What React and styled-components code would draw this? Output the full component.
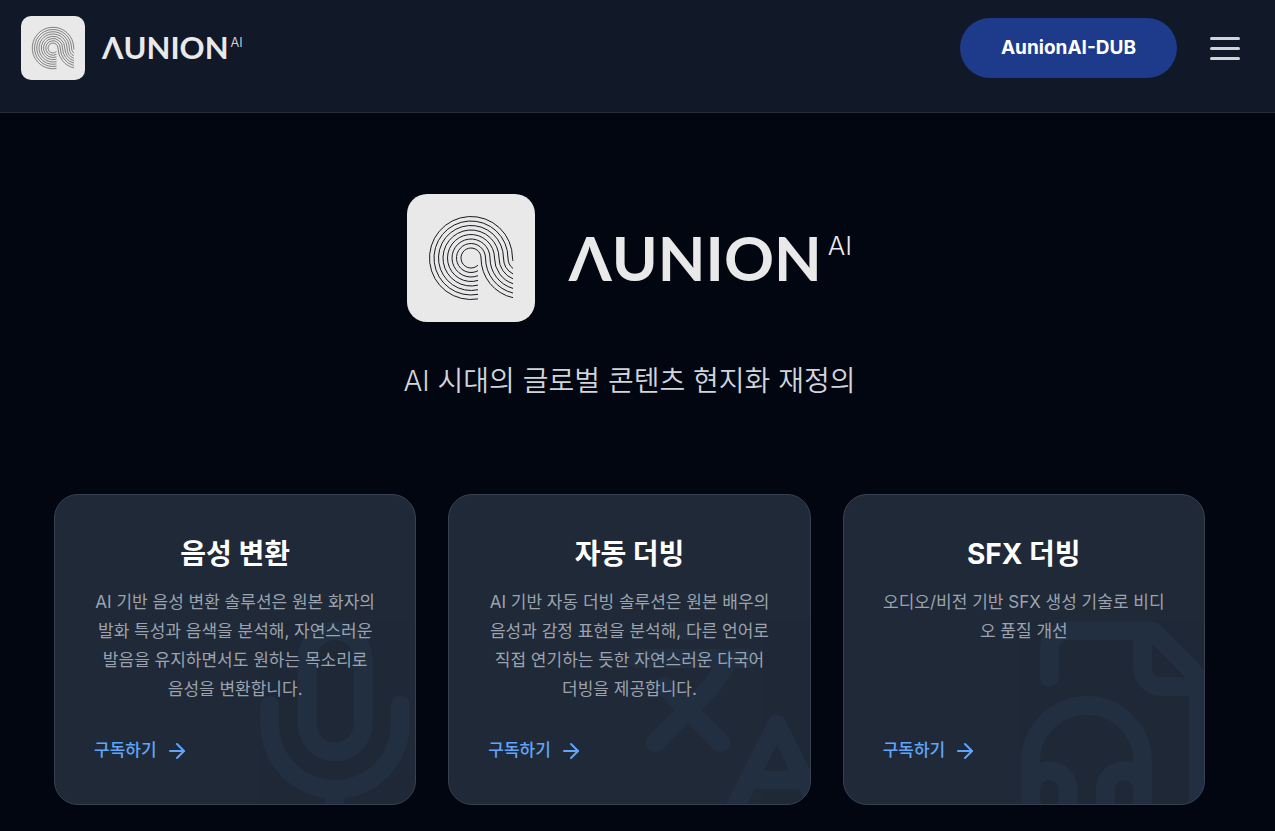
import React from "react";
import styled, { createGlobalStyle } from "styled-components";
import { ArrowRight, Languages, Mic } from "lucide-react";

const GlobalStyle = createGlobalStyle`
  *, *::before, *::after {
    box-sizing: border-box;
  }

  body {
    margin: 0;
    background: #020611;
    color: #ffffff;
    font-family: Inter, "Noto Sans CJK KR", sans-serif;
  }

  h1, h2, p {
    margin: 0;
  }
`;

const Page = styled.div`
  min-height: 100vh;
`;

const Header = styled.header`
  display: flex;
  align-items: center;
  justify-content: space-between;
  padding: 16px 35px 32px 21px;
  background: #111827;
  border-bottom: 1px solid #252d3b;
`;

const HomeLink = styled.a`
  display: flex;
  align-items: center;
  gap: 17px;
  color: #e9e9eb;
  text-decoration: none;
`;

const Actions = styled.div`
  display: flex;
  align-items: center;
  gap: 33px;
`;

const DubButton = styled.button`
  height: 60px;
  padding: 0 41px;
  border: 0;
  border-radius: 30px;
  background: #1e3a8a;
  color: #ffffff;
  font: inherit;
  font-size: 19px;
  font-weight: 700;
  line-height: 28px;
  cursor: pointer;
`;

const MenuButton = styled.button`
  display: flex;
  flex-direction: column;
  gap: 7px;
  width: 30px;
  padding: 0;
  border: 0;
  background: transparent;
  cursor: pointer;
`;

const MenuBar = styled.span`
  height: 3px;
  border-radius: 2px;
  background: #d1d5db;
`;

const LogoSvg = styled.svg`
  display: block;
  flex: none;
  width: ${(p) => p.$size}px;
  height: ${(p) => p.$size}px;
`;

const WordmarkText = styled.span`
  display: flex;
  align-items: flex-start;
  gap: ${(p) => (p.$large ? 6 : 2)}px;
  padding-bottom: 2px;
  color: #e9e9ea;
  font-family: Lato, sans-serif;
  font-size: ${(p) => (p.$large ? 62 : 31)}px;
  font-weight: 700;
  line-height: ${(p) => (p.$large ? 64 : 32)}px;
`;

const WordmarkSuffix = styled.span`
  font-family: Inter, sans-serif;
  font-size: ${(p) => (p.$large ? 26 : 13)}px;
  font-weight: 300;
  line-height: ${(p) => (p.$large ? 42 : 22)}px;
`;

const Main = styled.main`
  padding: 81px 70px 26px 54px;
`;

const Hero = styled.section`
  display: flex;
  flex-direction: column;
  align-items: center;
  gap: 39px;
  margin-bottom: 93px;
`;

const HeroLogo = styled.h1`
  display: flex;
  align-items: center;
  gap: 34px;
`;

const Tagline = styled.p`
  color: #d1d5db;
  font-size: 28px;
  font-weight: 350;
  line-height: 40px;
  text-align: center;
`;

const CardGrid = styled.section`
  display: grid;
  grid-template-columns: repeat(3, minmax(0, 1fr));
  gap: 32px;
`;

const Card = styled.article`
  position: relative;
  display: flex;
  flex-direction: column;
  overflow: hidden;
  padding: 41px 39px 39px;
  border: 1px solid #374151;
  border-radius: 24px;
  background: #1f2937;
`;

const Watermark = styled.div`
  position: absolute;
  right: -32px;
  bottom: -32px;
  color: #60a5fa;
  opacity: 0.05;
  pointer-events: none;

  svg {
    display: block;
    width: 224px;
    height: 224px;
  }
`;

const CardTitle = styled.h2`
  margin-bottom: 16px;
  font-size: 28px;
  font-weight: 700;
  line-height: 36px;
  text-align: center;
`;

const CardText = styled.p`
  flex: 1;
  margin-bottom: 32px;
  color: #9ca3af;
  font-size: 17px;
  line-height: 29px;
  text-align: center;
`;

const CardLink = styled.a`
  display: flex;
  align-items: center;
  gap: 8px;
  align-self: flex-start;
  color: #60a5fa;
  font-size: 17px;
  font-weight: 500;
  line-height: 29px;
  text-decoration: none;
`;

const RINGS = [10, 14.5, 19, 23.5, 28, 32.5, 37, 41.5];

// Each line circles the centre, then bends outward into the tail.
function ringPath(r) {
  const tail = 114.6 - 64 - r;
  const startY = 64 + Math.sqrt(r * r - 49);
  const endY = 64 + Math.sqrt(tail * tail - 8.6 * 8.6);
  return `M71 ${startY} A${r} ${r} 0 1 1 ${64 + r} 64 A${tail} ${tail} 0 0 0 106 ${endY}`;
}

function LogoMark({ size }) {
  return (
    <LogoSvg $size={size} viewBox="0 0 128 128" aria-hidden="true">
      <rect width="128" height="128" rx="20" fill="#e9e9e9" />
      <g fill="none" stroke="#16181c" strokeWidth="1">
        {RINGS.map((r) => (
          <path key={r} d={ringPath(r)} />
        ))}
      </g>
    </LogoSvg>
  );
}

function Wordmark({ large }) {
  return (
    <WordmarkText $large={large}>
      ΛUNION
      <WordmarkSuffix $large={large}>AI</WordmarkSuffix>
    </WordmarkText>
  );
}

function FileHeadphones() {
  return (
    <svg
      viewBox="0 0 24 24"
      fill="none"
      stroke="currentColor"
      strokeWidth="2"
      strokeLinecap="round"
      strokeLinejoin="round"
    >
      <path d="M17.5 22h.5a2 2 0 0 0 2-2V7l-5-5H6a2 2 0 0 0-2 2v3" />
      <path d="M14 2v4a2 2 0 0 0 2 2h4" />
      <path d="M2 19a2 2 0 1 1 4 0v1a2 2 0 1 1-4 0v-4a6 6 0 0 1 12 0v4a2 2 0 1 1-4 0v-1a2 2 0 1 1 4 0" />
    </svg>
  );
}

const SERVICES = [
  {
    title: "음성 변환",
    text: "AI 기반 음성 변환 솔루션은 원본 화자의 발화 특성과 음색을 분석해, 자연스러운 발음을 유지하면서도 원하는 목소리로 음성을 변환합니다.",
    icon: Mic,
  },
  {
    title: "자동 더빙",
    text: "AI 기반 자동 더빙 솔루션은 원본 배우의 음성과 감정 표현을 분석해, 다른 언어로 직접 연기하는 듯한 자연스러운 다국어 더빙을 제공합니다.",
    icon: Languages,
  },
  {
    title: "SFX 더빙",
    text: "오디오/비전 기반 SFX 생성 기술로 비디오 품질 개선",
    icon: FileHeadphones,
  },
];

export default function App() {
  return (
    <Page>
      <GlobalStyle />
      <Header>
        <HomeLink href="#">
          <LogoMark size={64} />
          <Wordmark />
        </HomeLink>
        <Actions>
          <DubButton type="button">AunionAI-DUB</DubButton>
          <MenuButton type="button" aria-label="메뉴">
            <MenuBar />
            <MenuBar />
            <MenuBar />
          </MenuButton>
        </Actions>
      </Header>
      <Main>
        <Hero>
          <HeroLogo>
            <LogoMark size={128} />
            <Wordmark large />
          </HeroLogo>
          <Tagline>AI 시대의 글로벌 콘텐츠 현지화 재정의</Tagline>
        </Hero>
        <CardGrid>
          {SERVICES.map(({ title, text, icon: Icon }) => (
            <Card key={title}>
              <Watermark>
                <Icon />
              </Watermark>
              <CardTitle>{title}</CardTitle>
              <CardText>{text}</CardText>
              <CardLink href="#">
                구독하기
                <ArrowRight size={24} />
              </CardLink>
            </Card>
          ))}
        </CardGrid>
      </Main>
    </Page>
  );
}
